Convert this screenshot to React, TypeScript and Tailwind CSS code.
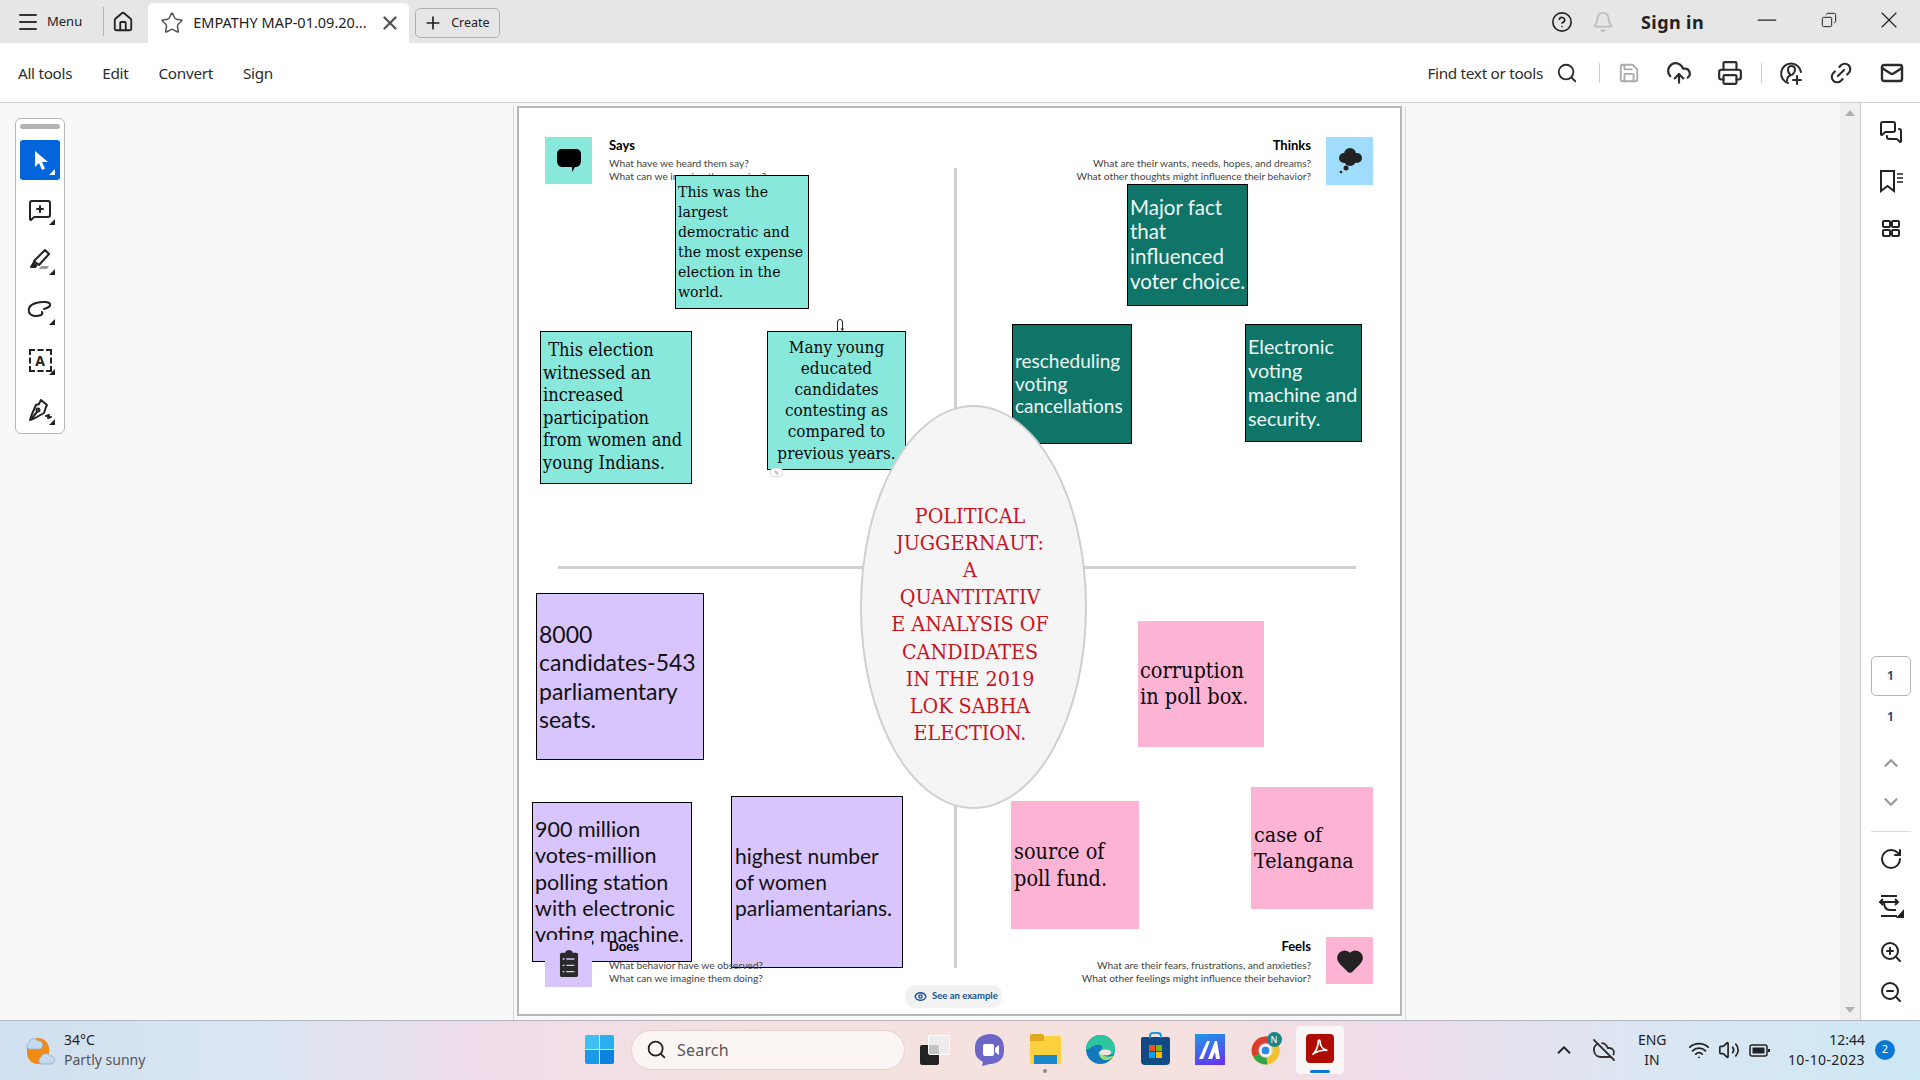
import type { ReactNode } from "react";
import {
  Bell,
  ChevronDown,
  ChevronUp,
  CircleHelp,
  CloudOff,
  CloudUpload,
  Copy,
  Eye,
  Heart,
  Home,
  Link2,
  Mail,
  Menu,
  MessageSquarePlus,
  MessagesSquare,
  Minus,
  Plus,
  Printer,
  RotateCw,
  Save,
  Search,
  Star,
  Volume2,
  Wifi,
  X,
  ZoomIn,
  ZoomOut,
} from "lucide-react";

const uiFont = "font-['Noto_Sans','Open_Sans',sans-serif]";
const serifFont = "font-['DejaVu_Serif_Condensed','DejaVu_Serif','Liberation_Serif',serif] [font-stretch:condensed]";
const noteFont = "font-['Lato','Open_Sans',sans-serif]";

function ToolButton({ children, active }: { children: ReactNode; active?: boolean }) {
  return (
    <div className={`relative flex h-10 w-10 items-center justify-center rounded-[3px] ${active ? "bg-[#0265dc] text-white" : "text-[#222]"}`}>
      {children}
      <span className={`absolute right-[5px] bottom-[5px] h-0 w-0 border-b-[6px] border-l-[6px] border-l-transparent ${active ? "border-b-white" : "border-b-[#222]"}`} />
    </div>
  );
}

function ToolRail() {
  return (
    <div className="absolute top-[15px] left-[15px] flex h-[316px] w-[50px] flex-col items-center rounded-[6px] border border-[#b8b8b8] bg-white pt-[5px]">
      <div className="h-[5px] w-10 shrink-0 rounded-full bg-[#b3b3b3]" />
      <div className="mt-[11px] flex flex-col gap-[10px]">
        <ToolButton active>
          <svg width="24" height="24" viewBox="0 0 24 24" fill="white">
            <path d="M7 3v16l4-4 3 7 3-1.500-3-6.500h6Z" />
          </svg>
        </ToolButton>
        <ToolButton>
          <MessageSquarePlus size={24} strokeWidth={2} />
        </ToolButton>
        <ToolButton>
          <svg width="24" height="24" viewBox="0 0 24 24" fill="none" stroke="currentColor" strokeWidth="2" strokeLinejoin="round">
            <path d="M17 2l4 4-10 11-5-4Z" />
            <path d="M6 14l-3 5h4l2-2" fill="currentColor" />
            <path d="M11 21l2-3h8l-2 3Z" fill="#999" stroke="none" />
          </svg>
        </ToolButton>
        <ToolButton>
          <svg width="26" height="24" viewBox="0 0 26 24" fill="none" stroke="currentColor" strokeWidth="2" strokeLinecap="round">
            <path d="M17 11c4-1 7-3 6-5S16 3 9 5 1 11 2 14c1 4 7 5 12 3 0 0 2-1 1-3" />
          </svg>
        </ToolButton>
        <ToolButton>
          <div className={`flex h-[23px] w-[23px] items-center justify-center border-2 border-dashed border-[#222] text-[14px] font-bold ${uiFont}`}>A</div>
        </ToolButton>
        <ToolButton>
          <svg width="26" height="26" viewBox="0 0 26 26" fill="none" stroke="currentColor" strokeWidth="2" strokeLinejoin="round" strokeLinecap="round">
            <path d="M14 3l6 5-1 2-2 6-9 5-5 2 2-6 4-9 3-1Z" />
            <path d="M5 21l5-6" />
            <circle cx="11" cy="13" r="1.500" />
            <path d="M19 19l3-1-1 3 3-1" />
          </svg>
        </ToolButton>
      </div>
    </div>
  );
}

function TitleBar() {
  return (
    <div className={`flex h-[43px] shrink-0 items-end bg-[#e6e6e6] text-[#222] ${uiFont}`}>
      <div className="flex h-[43px] items-center pl-[16px]">
        <Menu size={24} strokeWidth={2} className="shrink-0 text-[#333]" />
        <span className="ml-[7px] text-[13px]">Menu</span>
        <div className="ml-[21px] h-[29px] w-px bg-[#b5b5b5]" />
        <Home size={22} strokeWidth={2} className="ml-[8px] shrink-0" />
      </div>
      <div className="ml-[14px] flex h-10 w-[261px] shrink-0 items-center rounded-t-[5px] bg-white pl-[12px]">
        <Star size={24} strokeWidth={1.5} className="shrink-0 text-[#555]" />
        <span className="ml-[9px] text-[14.500px] whitespace-nowrap">EMPATHY MAP-01.09.20...</span>
        <X size={22} strokeWidth={2.6} className="mr-[8px] ml-auto shrink-0 text-[#555]" />
      </div>
      <div className="mb-[5px] ml-[6px] flex h-[30px] w-[85px] items-center rounded-[5px] border border-[#b0b0b0] pl-[7px]">
        <Plus size={20} strokeWidth={2} className="shrink-0" />
        <span className="ml-[8px] text-[12.500px]">Create</span>
      </div>
      <div className="ml-auto flex h-[43px] items-center pr-[17px]">
        <CircleHelp size={22} strokeWidth={1.8} />
        <Bell size={22} strokeWidth={2} className="ml-[19px] text-[#bdbdbd]" />
        <span className="ml-[27px] translate-y-[1px] text-[18px] font-bold tracking-[0.4px]">Sign in</span>
        <Minus size={30} strokeWidth={1} className="ml-[48px] -translate-y-[2px]" />
        <Copy size={16} strokeWidth={1.500} className="ml-[39px] -translate-y-[2px] -scale-x-100" />
        <X size={28} strokeWidth={1} className="ml-[38px] -translate-y-[2px]" />
      </div>
    </div>
  );
}

function ActionBar() {
  return (
    <div className={`flex h-[60px] shrink-0 items-center border-b border-[#d0d0d0] bg-white pt-[1px] text-[#2c2c2c] ${uiFont}`}>
      <nav className="flex items-center gap-[30px] pl-[18px] text-[15.300px] tracking-[-0.3px]">
        <span>All tools</span>
        <span>Edit</span>
        <span>Convert</span>
        <span>Sign</span>
      </nav>
      <div className="ml-auto flex items-center pr-[16px]">
        <span className="text-[15.300px] tracking-[-0.3px]">Find text or tools</span>
        <Search size={22} strokeWidth={2} className="ml-[13px]" />
        <div className="ml-[21px] h-5 w-px bg-[#d0d0d0]" />
        <Save size={22} strokeWidth={2} className="ml-[18px] text-[#aaa]" />
        <CloudUpload size={26} strokeWidth={2} className="ml-[26px]" />
        <Printer size={26} strokeWidth={2} className="ml-[25px]" />
        <div className="ml-[18px] h-5 w-px bg-[#d0d0d0]" />
        <svg className="ml-[17px]" width="24" height="24" viewBox="0 0 24 24" fill="none" stroke="currentColor" strokeWidth="2" strokeLinecap="round">
          <path d="M9 22A10 10 0 1 1 22 11" />
          <path d="M8 20c0-3 1-5 4-6-2-1-3-3-3-5s1-4 3.500-4S16 7 16 9s-1 3-2 4" />
          <path d="M18 15v8M14 19h8" />
        </svg>
        <Link2 size={26} strokeWidth={2} className="ml-[25px] -rotate-45" />
        <Mail size={24} strokeWidth={2.400} className="ml-[26px]" />
      </div>
    </div>
  );
}

function SectionText({ title, lines, right, className }: { title: string; lines: string[]; right?: boolean; className: string }) {
  return (
    <div className={`absolute ${noteFont} ${right ? "text-right" : ""} ${className}`}>
      <div className="text-[13px] leading-[14px] font-bold text-black">{title}</div>
      <div className="mt-[5px] text-[10.200px] leading-[12.500px] whitespace-nowrap text-[#444]">
        {lines.map((l) => (
          <div key={l}>{l}</div>
        ))}
      </div>
    </div>
  );
}

function PdfPage() {
  return (
    <div className="relative h-[910px] w-[885px] shrink-0 border-2 border-[#b8b8b8] bg-white">
      {/* cross lines */}
      <div className="absolute top-[60px] left-[435px] h-[800px] w-[3px] bg-[#d0d0d0]" />
      <div className="absolute top-[458px] left-[39px] h-[3px] w-[798px] bg-[#d0d0d0]" />

      {/* Says */}
      <div className="absolute top-[29px] left-[26px] flex h-[47px] w-[47px] items-center justify-center bg-[#88e8dc]">
        <svg width="26" height="26" viewBox="0 0 26 26" fill="black">
          <path d="M6 1h14c3 0 5 2 5 5v7c0 3-2 6-5 6h-1l-3 5v-5H6c-3 0-5-3-5-6V6c0-3 2-5 5-5Z" />
        </svg>
      </div>
      <SectionText className="top-[30px] left-[90px]" title="Says" lines={["What have we heard them say?", "What can we imagine them saying?"]} />
      <div className={`absolute top-[67px] left-[156px] h-[134px] w-[134px] border border-black bg-[#88e8dc] pt-[6px] pl-[2px] text-[15.700px] leading-[20px] whitespace-nowrap text-[#0a0a0a] ${serifFont}`}>
        This was the<br />largest<br />democratic and<br />the most expense<br />election in the<br />world.
      </div>
      <div className={`absolute top-[223px] left-[21px] h-[153px] w-[152px] border border-black bg-[#88e8dc] pt-[7px] pl-[2px] text-[18.100px] leading-[22.500px] whitespace-nowrap text-[#0a0a0a] ${serifFont}`}>
        &nbsp;This election<br />witnessed an<br />increased<br />participation<br />from women and<br />young Indians.
      </div>
      <div className={`absolute top-[223px] left-[248px] h-[139px] w-[139px] border border-black bg-[#88e8dc] pt-[4.500px] text-center text-[17px] leading-[21.200px] whitespace-nowrap text-[#0a0a0a] ${serifFont}`}>
        Many young<br />educated<br />candidates<br />contesting as<br />compared to<br />previous years.
      </div>
      {/* small marks left on the page around this note */}
      <svg className="absolute top-[211px] left-[317px]" width="8" height="13" viewBox="0 0 8 13" fill="none" stroke="#222" strokeWidth="1">
        <path d="M1.500 12V3a2.500 2.500 0 0 1 5 0v7" />
        <path d="M4.500 9.500h3.500L6.300 12Z" fill="#222" stroke="none" />
      </svg>
      <div className="absolute top-[360px] left-[251px] flex h-[9px] w-[13px] items-center justify-center rounded-[3px] border border-[#ddd] bg-white text-[6px] leading-none text-[#888]">
        ✎
      </div>

      {/* Thinks */}
      <SectionText right className="top-[30px] right-[89px]" title="Thinks" lines={["What are their wants, needs, hopes, and dreams?", "What other thoughts might influence their behavior?"]} />
      <div className="absolute top-[29px] left-[807px] flex h-[48px] w-[47px] items-center justify-center bg-[#a0dcfb]">
        <svg width="28" height="28" viewBox="0 0 28 28" fill="#222">
          <circle cx="14" cy="7" r="6" />
          <circle cx="8" cy="11" r="5" />
          <circle cx="21" cy="11" r="5" />
          <circle cx="14" cy="13" r="6" />
          <circle cx="10" cy="21" r="2.500" />
          <circle cx="5" cy="25" r="1.300" />
        </svg>
      </div>
      <div className={`absolute top-[76px] left-[608px] h-[122px] w-[121px] border border-black bg-[#107569] pt-[9.500px] pl-[2px] text-[20.500px] leading-[24.800px] whitespace-nowrap text-[#eef5f2] ${noteFont}`}>
        Major fact<br />that<br />influenced<br />voter choice.
      </div>
      <div className={`absolute top-[216px] left-[493px] flex h-[120px] w-[120px] items-center border border-black bg-[#107569] pl-[2px] text-[19px] leading-[22.500px] whitespace-nowrap text-[#eef5f2] ${noteFont}`}>
        <span>rescheduling<br />voting<br />cancellations</span>
      </div>
      <div className={`absolute top-[216px] left-[726px] h-[118px] w-[117px] border border-black bg-[#107569] pt-[10px] pl-[2px] text-[19.700px] leading-[24px] whitespace-nowrap text-[#eef5f2] ${noteFont}`}>
        Electronic<br />voting<br />machine and<br />security.
      </div>

      {/* Does */}
      <div className={`absolute top-[485px] left-[17px] flex h-[167px] w-[168px] items-center border border-black bg-[#d8c5fe] pl-[2px] text-[23px] leading-[28.300px] whitespace-nowrap text-[#111] ${noteFont}`}>
        <span>8000<br />candidates-543<br />parliamentary<br />seats.</span>
      </div>
      <div className={`absolute top-[694px] left-[13px] h-[160px] w-[160px] overflow-hidden border border-black bg-[#d8c5fe] pt-[13px] pl-[2px] text-[21.500px] leading-[26.300px] whitespace-nowrap text-[#111] ${noteFont}`}>
        900 million<br />votes-million<br />polling station<br />with electronic<br />voting machine.
      </div>
      <div className={`absolute top-[688px] left-[212px] flex h-[172px] w-[172px] items-center border border-black bg-[#d8c5fe] pl-[3px] text-[21px] leading-[26px] whitespace-nowrap text-[#111] ${noteFont}`}>
        <span>highest number<br />of women<br />parliamentarians.</span>
      </div>
      <div className="absolute top-[832px] left-[26px] flex h-[47px] w-[47px] items-center justify-center bg-[#d8c5fe]">
        <svg className="-mt-[1px]" width="20" height="29" viewBox="0 0 22 32" fill="#2a2a2a">
          <path d="M3 4h4c0-2 2-3 4-3s4 1 4 3h4c1 0 2 1 2 2v23c0 1-1 2-2 2H3c-1 0-2-1-2-2V6c0-1 1-2 2-2Z" />
          <path d="M4 11h2M8 11h9M4 18h2M8 18h9M4 25h2M8 25h9" stroke="#d8c5fe" strokeWidth="1.500" />
        </svg>
      </div>
      <SectionText className="top-[831px] left-[90px] [&>div:last-child]:mt-[6px]" title="Does" lines={["What behavior have we observed?", "What can we imagine them doing?"]} />

      {/* Feels */}
      <div className={`absolute top-[513px] left-[619px] flex h-[126px] w-[126px] items-center bg-[#fdb3d4] pl-[2px] text-[21.500px] leading-[26px] whitespace-nowrap text-[#0a0a0a] ${serifFont}`}>
        <span>corruption<br />in poll box.</span>
      </div>
      <div className={`absolute top-[693px] left-[492px] flex h-[128px] w-[128px] items-center bg-[#fdb3d4] pl-[3px] text-[21.500px] leading-[27px] whitespace-nowrap text-[#0a0a0a] ${serifFont}`}>
        <span>source of<br />poll fund.</span>
      </div>
      <div className={`absolute top-[679px] left-[732px] flex h-[122px] w-[122px] items-center bg-[#fdb3d4] pl-[3px] text-[21.300px] leading-[26px] whitespace-nowrap text-[#0a0a0a] ${serifFont}`}>
        <span>case of<br />Telangana</span>
      </div>
      <SectionText right className="top-[831px] right-[89px] [&>div:last-child]:mt-[6px]" title="Feels" lines={["What are their fears, frustrations, and anxieties?", "What other feelings might influence their behavior?"]} />
      <div className="absolute top-[829px] left-[807px] flex h-[47px] w-[47px] items-center justify-center bg-[#fdb3d4]">
        <Heart size={28} fill="#222" stroke="#222" />
      </div>

      {/* Centre ellipse */}
      <div className={`absolute top-[297px] left-[341px] flex h-[404px] w-[227px] items-center justify-center rounded-[50%] border-2 border-[#cfcfcf] bg-[#f5f5f5] pt-[34px] pr-[7px] text-center text-[21.300px] leading-[27.100px] whitespace-nowrap text-[#c8141e] ${serifFont}`}>
        <span>
          POLITICAL<br />JUGGERNAUT:<br />A<br />QUANTITATIV<br />E ANALYSIS OF<br />CANDIDATES<br />IN THE 2019<br />LOK SABHA<br />ELECTION.
        </span>
      </div>

      {/* See an example */}
      <div className={`absolute top-[877px] left-[386px] flex h-[23px] w-[97px] items-center gap-[5px] rounded-[10px] bg-[#f2f2f2] pl-[9px] text-[9.500px] font-bold text-[#15508f] ${noteFont}`}>
        <Eye size={13} strokeWidth={2.500} />
        <span>See an example</span>
      </div>
    </div>
  );
}

function SidePanel() {
  return (
    <div className="flex w-[60px] shrink-0 flex-col items-center border-l border-[#d0d0d0] bg-white pt-[17px] pb-[16px] text-[#222]">
      <MessagesSquare size={24} strokeWidth={2} />
      <svg className="mt-[25px]" width="24" height="24" viewBox="0 0 24 24" fill="none" stroke="currentColor" strokeWidth="2">
        <path d="M2 2h13v20l-6.500-5L2 22Z" />
        <path d="M18 5h6M18 9h6M18 13h6" strokeWidth="1.500" />
      </svg>
      <svg className="mt-[24px]" width="22" height="22" viewBox="0 0 22 22" fill="none" stroke="currentColor" strokeWidth="2">
        <rect x="3" y="4" width="7" height="6" rx="1" />
        <rect x="12" y="4" width="7" height="6" rx="1" />
        <rect x="3" y="13" width="7" height="6" rx="1" />
        <rect x="12" y="13" width="7" height="6" rx="1" />
      </svg>
      <div className={`mt-auto flex h-10 w-10 items-center justify-center rounded-[5px] border border-[#b5b5b5] text-[13px] font-semibold text-[#1b3f6e] ${uiFont}`}>1</div>
      <div className={`mt-[10px] h-5 text-[13px] leading-[20px] font-semibold text-[#1b3f6e] ${uiFont}`}>1</div>
      <ChevronUp size={22} strokeWidth={2.500} className="mt-[26px] text-[#999]" />
      <ChevronDown size={22} strokeWidth={2.500} className="mt-[17px] text-[#999]" />
      <div className="mt-[18px] h-px w-10 bg-[#ddd]" />
      <RotateCw size={24} strokeWidth={2} className="mt-[15px]" />
      <svg className="mt-[23px]" width="26" height="24" viewBox="0 0 26 24" fill="none" stroke="currentColor" strokeWidth="2">
        <path d="M3 2h16M3 22h16M2 8h18M5 5 2 8l3 3M17 5l3 3-3 3" />
        <path d="M6 8c0 5 2 8 6 8h6" />
        <path d="M26 15v9h-8Z" fill="currentColor" stroke="none" />
      </svg>
      <ZoomIn size={24} strokeWidth={2} className="mt-[22px]" />
      <ZoomOut size={24} strokeWidth={2} className="mt-[16px]" />
    </div>
  );
}

function TrayApp({ children, active, dot }: { children: ReactNode; active?: boolean; dot?: boolean }) {
  return (
    <div className={`relative flex h-12 w-12 items-center justify-center rounded-[4px] ${active ? "bg-[#faf6f5]" : ""}`}>
      {children}
      {active && <div className="absolute bottom-[1px] h-[3px] w-[20px] rounded-full bg-[#0b78d6]" />}
      {dot && <div className="absolute bottom-[1px] h-[4px] w-[4px] rounded-full bg-[#888]" />}
    </div>
  );
}

function Taskbar() {
  return (
    <div className={`relative flex h-[60px] shrink-0 items-center border-t border-[#b5b9bf] bg-[linear-gradient(90deg,#cfe0f0_0%,#dbe6f2_14%,#efdcea_25%,#f5e2df_40%,#f5e2df_62%,#efdcea_72%,#dce6f2_85%,#cde8f5_100%)] ${uiFont}`}>
      <div className="absolute top-0 left-[24px] flex h-full items-center">
        <div className="relative h-[30px] w-[32px]">
          <div className="absolute top-[2px] left-[3px] h-[26px] w-[22px] rounded-[12px] bg-[#f08a14]" />
          <svg className="absolute top-0 left-0" width="20" height="14" viewBox="0 0 20 14" fill="#c5d9ef" stroke="#9bb7d8">
            <path d="M5 13a4 4 0 0 1 0-7 5 5 0 0 1 9-1 4 4 0 0 1 1 8Z" />
          </svg>
          <svg className="absolute top-[15px] left-[12px]" width="20" height="14" viewBox="0 0 20 14" fill="#c5d9ef" stroke="#9bb7d8">
            <path d="M5 13a4 4 0 0 1 0-7 5 5 0 0 1 9-1 4 4 0 0 1 1 8Z" />
          </svg>
        </div>
        <div className="ml-[8px] -translate-y-[1px] text-[14px] leading-[20px]">
          <div className="text-[#222]">34°C</div>
          <div className="text-[#555]">Partly sunny</div>
        </div>
      </div>

      <div className="absolute top-0 left-[585px] flex h-full -translate-y-[1px] items-center">
        <div className="grid h-[29px] w-[29px] grid-cols-2 gap-[1px]">
          <div className="rounded-tl-[2px] bg-[#3fc0f2]" />
          <div className="rounded-tr-[2px] bg-[#2aaef0]" />
          <div className="rounded-bl-[2px] bg-[#1a9ae8]" />
          <div className="rounded-br-[2px] bg-[#0a82de]" />
        </div>
        <div className="ml-[17px] flex h-10 w-[274px] items-center rounded-full border border-[#e3d2cf] bg-[#fbf5f3] pl-[14px] text-[#555]">
          <Search size={21} strokeWidth={2} className="text-[#222]" />
          <span className="ml-[10px] text-[16px] tracking-[0.2px]">Search</span>
        </div>
        <div className="relative ml-[9px] h-12 w-[52px]">
          <div className="absolute top-[19px] left-[6px] h-[20px] w-[19px] rounded-[2px] bg-[#222]" />
          <div className="absolute top-[9px] left-[14px] h-[20px] w-[22px] rounded-[2px] border border-white bg-[#eeeeee]/80" />
        </div>
        <div className="flex gap-[7px]">
          <TrayApp>
            <svg width="30" height="34" viewBox="0 0 30 34" fill="#6d66c9">
              <path d="M15 1c8 0 14 5 14 14v3c0 8-6 13-14 13l-8 2 1-4c-5-3-8-6-8-12v-3C0 6 7 1 15 1Z" />
              <rect x="8" y="11" width="11" height="12" rx="2" fill="white" />
              <path d="M20 15l4-3v10l-4-3Z" fill="white" />
            </svg>
          </TrayApp>
          <TrayApp dot>
            <div className="relative h-[28px] w-[31px] rounded-[2px] bg-[#fbd03f]">
              <div className="absolute -top-[2px] left-0 h-[7px] w-[14px] rounded-t-[2px] bg-[#e1a921]" />
              <div className="absolute right-[4px] bottom-0 left-[4px] h-[9px] bg-[#1b89d0]" />
            </div>
          </TrayApp>
          <TrayApp>
            <svg width="31" height="31" viewBox="0 0 32 32" fill="none">
              <circle cx="16" cy="16" r="15" fill="#1478bf" />
              <path d="M1 16A15 15 0 0 1 31 16c0 5-4 6-8 6-5 0-7-3-6-6s1-5-3-5c-6 0-9 5-13 5Z" fill="#2ec4a0" />
              <path d="M14 18c0 6 4 9 8 9s6-2 8-5c-4 2-8 2-11 0-2-1-3-3-5-4Z" fill="#8fe07a" />
              <ellipse cx="21" cy="19" rx="6" ry="3" fill="#f5e2df" />
            </svg>
          </TrayApp>
          <TrayApp>
            <div className="relative mt-[3px] grid h-[28px] w-[29px] grid-cols-2 content-center gap-[1px] rounded-t-[2px] rounded-b-[4px] bg-[#114a85] px-[8px] py-[6px]">
              <div className="absolute -top-[5px] left-[8px] h-[6px] w-[13px] rounded-t-[4px] border-2 border-b-0 border-[#1c9ad8]" />
              <div className="h-[6px] bg-[#f25022]" />
              <div className="h-[6px] bg-[#7fba00]" />
              <div className="h-[6px] bg-[#00a4ef]" />
              <div className="h-[6px] bg-[#ffb900]" />
            </div>
          </TrayApp>
          <TrayApp>
            <div className="flex h-[31px] w-[30px] items-center justify-center bg-[linear-gradient(160deg,#1e9be8,#6a2cf0)]">
              <svg width="22" height="18" viewBox="0 0 22 18" fill="white">
                <path d="M8 0h3L4 18H0ZM16 0h2l3 18h-4l-1-7-3 7H9Z" />
              </svg>
            </div>
          </TrayApp>
          <TrayApp>
            <div className="relative h-[31px] w-[31px]">
              <svg width="31" height="31" viewBox="0 0 32 32" fill="none" strokeWidth="7">
                <circle cx="16" cy="17" r="11" stroke="#f3c22c" />
                <path d="M6.500 22A11 11 0 0 1 16 6h8" stroke="#db3d32" />
                <path d="M6.500 22a11 11 0 0 0 11 6" stroke="#2ea44f" />
                <circle cx="16" cy="17" r="5" fill="#2c86e8" stroke="white" strokeWidth="2" />
              </svg>
              <div className="absolute -top-[2px] -right-[1px] flex h-[15px] w-[15px] items-center justify-center rounded-full bg-[#17868e] text-[9px] text-white">N</div>
            </div>
          </TrayApp>
          <TrayApp active>
            <div className="mb-[3px] flex h-[29px] w-[28px] items-center justify-center rounded-[4px] bg-[#ae0c00]">
              <svg width="20" height="20" viewBox="0 0 24 24" fill="none" stroke="white" strokeWidth="2">
                <path d="M3 20c4-3 7-10 7-16 0-2 2-2 2 0 0 6 4 10 9 11-6-1-14 1-18 5Z" />
              </svg>
            </div>
          </TrayApp>
        </div>
      </div>

      <div className="ml-auto flex items-center pr-[25px] pb-[2px]">
        <ChevronUp size={22} strokeWidth={2} className="text-[#222]" />
        <CloudOff size={24} strokeWidth={1.800} className="ml-[17px] text-[#333]" />
        <div className="ml-[22px] w-[28px] text-center text-[14px] leading-[20px] text-[#222]">
          <div>ENG</div>
          <div>IN</div>
        </div>
        <Wifi size={22} strokeWidth={2} className="ml-[22px] text-[#222]" />
        <Volume2 size={22} strokeWidth={1.800} className="ml-[8px] text-[#222]" />
        <svg className="ml-[9px] text-[#222]" width="22" height="22" viewBox="0 0 22 22" fill="none" stroke="currentColor" strokeWidth="1.500">
          <rect x="1" y="6" width="17" height="11" rx="2" />
          <rect x="3.500" y="8.500" width="12" height="6" fill="currentColor" stroke="none" />
          <path d="M20 10v3" strokeWidth="2" />
        </svg>
        <div className="ml-[17px] text-right text-[14px] leading-[20px] text-[#222]">
          <div>12:44</div>
          <div className="tracking-[0.4px]">10-10-2023</div>
        </div>
        <div className="ml-[10px] flex h-5 w-5 items-center justify-center rounded-full bg-[#0b78d6] text-[11px] text-white">2</div>
      </div>
    </div>
  );
}

export default function App() {
  return (
    <div className="flex h-[1080px] w-[1920px] flex-col overflow-hidden bg-[#f8f8f8]">
      <TitleBar />
      <ActionBar />
      <div className="relative flex min-h-0 flex-1">
        <ToolRail />
        <div className="flex flex-1 pt-[3px]">
          <div className="ml-[513px] flex w-[893px] border-x border-[#d8d8d8] pl-[3px]">
            <PdfPage />
          </div>
        </div>
        <div className="flex w-[20px] shrink-0 flex-col items-center justify-between bg-[#efefef] py-[7px]">
          <div className="h-0 w-0 border-x-[5px] border-b-[6px] border-x-transparent border-b-[#b0b0b0]" />
          <div className="h-0 w-0 border-x-[5px] border-t-[6px] border-x-transparent border-t-[#b0b0b0]" />
        </div>
        <SidePanel />
      </div>
      <Taskbar />
    </div>
  );
}
